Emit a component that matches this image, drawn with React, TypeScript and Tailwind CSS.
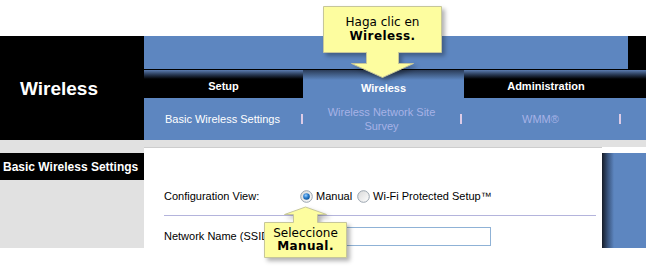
import React from "react";

function Radio({ checked }: { checked: boolean }) {
  return (
    <svg width="13" height="13" viewBox="0 0 13 13" className="shrink-0">
      <defs>
        <linearGradient id={checked ? "rgA" : "rgB"} x1="0" y1="0" x2="1" y2="1">
          <stop offset="0" stopColor="#d8d8d8" />
          <stop offset="1" stopColor="#ffffff" />
        </linearGradient>
        <radialGradient id="dot" cx="0.4" cy="0.35" r="0.7">
          <stop offset="0" stopColor="#9fd0ff" />
          <stop offset="0.5" stopColor="#2a7fd0" />
          <stop offset="1" stopColor="#0b4a8c" />
        </radialGradient>
      </defs>
      <circle cx="6.5" cy="6.5" r="5.8" fill={`url(#${checked ? "rgA" : "rgB"})`} stroke="#9aa4ae" strokeWidth="1" />
      {checked && <circle cx="6.5" cy="6.5" r="3.3" fill="url(#dot)" />}
    </svg>
  );
}

export default function App() {
  const blue = "bg-[#5d86c0]";
  return (
    <div className="relative w-[646px] h-[268px] overflow-hidden bg-white font-['Liberation_Sans',Arial,sans-serif]">
      <div className="h-[36px]" />
      {/* Header */}
      <div className="flex h-[104px]">
        <div className="w-[144px] bg-black flex items-center pl-[20px]">
          <span className="text-white font-bold text-[19px] leading-none">Wireless</span>
        </div>
        <div className="flex-1 flex flex-col">
          <div className="flex h-[33px]">
            <div className={`flex-1 ${blue}`} />
            <div className="w-[18px] bg-black" />
          </div>
          <div className="h-[1px] bg-black" />
          <div className="flex h-[28px] text-[11px] font-bold text-white">
            <div className="w-[159px] bg-[linear-gradient(to_bottom,#5b7cb0_0px,#24334c_5px,#000_9px)] flex items-center justify-center pt-[4px]">
              Setup
            </div>
            <div className="w-[161px] bg-[linear-gradient(to_bottom,#2b3c58_0px,#5d86c0_10px)] flex items-center justify-center pt-[8px]">
              Wireless
            </div>
            <div className="flex-1 bg-[linear-gradient(to_bottom,#5b7cb0_0px,#24334c_5px,#000_9px)] flex items-center justify-center pt-[4px] pr-[18px]">
              Administration
            </div>
          </div>
          <div className={`flex h-[42px] ${blue} text-[11px] leading-[14px]`}>
            <div className="w-[157px] flex items-center justify-center text-white">Basic Wireless Settings</div>
            <div className="w-[2px] flex items-center"><div className="w-[2px] h-[10px] bg-[#dccbe6]" /></div>
            <div className="w-[157px] flex items-center justify-center text-[#a7b2e6] text-center">
              <span className="w-[120px]">Wireless Network Site Survey</span>
            </div>
            <div className="w-[2px] flex items-center"><div className="w-[2px] h-[10px] bg-[#dccbe6]" /></div>
            <div className="w-[157px] flex items-center justify-center text-[#a7b2e6]">WMM®</div>
            <div className="w-[2px] flex items-center"><div className="w-[2px] h-[10px] bg-[#dccbe6]" /></div>
          </div>
        </div>
      </div>
      {/* gray strip */}
      <div className="h-[7px] bg-[#e1e1e1]" />
      {/* Body */}
      <div className="flex h-[121px]">
        <div className="w-[144px]">
          <div className="h-[101px] bg-[#e1e1e1] pt-[6px]">
            <div className="h-[27px] bg-black flex items-center pl-[3px] text-white font-bold text-[12px]">
              Basic Wireless Settings
            </div>
          </div>
        </div>
        <div className="w-[458px] bg-white border-t border-[#cdcdcd] pl-[20px] pt-[38px] text-[11px] text-black">
          <div className="flex items-center h-[20px]">
            <span className="w-[136px]">Configuration View:</span>
            <Radio checked />
            <span className="ml-[3px]">Manual</span>
            <span className="ml-[5px]"><Radio checked={false} /></span>
            <span className="ml-[3px]">Wi-Fi Protected Setup™</span>
          </div>
          <div className="mt-[9px] w-[432px] h-[1px] bg-[#b4b4dc]" />
          <div className="flex items-center h-[20px] mt-[10px]">
            <span className="w-[181px]">Network Name (SSID):</span>
            <div className="w-[146px] h-[19px] border border-[#8fb2d6] bg-white" />
          </div>
        </div>
        <div className="w-[44px] pt-[6px]">
          <div className="h-[95px] bg-[linear-gradient(to_right,#161c28_0px,#3a557e_6px,#5d86c0_12px)]" />
        </div>
      </div>

      {/* Callout 1 */}
      <svg
        className="absolute left-[320px] top-[3px] drop-shadow-[3px_3px_2px_rgba(0,0,0,0.3)]"
        width="130"
        height="80"
        viewBox="0 0 130 80"
      >
        <path
          d="M3.5,3.5 H121.5 V49.5 H78.5 V60.5 H93.5 L62.5,74.5 L31.5,60.5 H46.5 V49.5 H3.5 Z"
          fill="#fdfd9f"
          stroke="#c6c69a"
          strokeWidth="1"
        />
      </svg>
      <div className="absolute left-[323px] top-[6px] w-[119px] h-[46px] flex flex-col items-center justify-center font-['DejaVu_Sans',Verdana,sans-serif] text-[12px] leading-[14px] text-black">
        <span>Haga clic en</span>
        <span className="font-bold tracking-[0.4px]">Wireless.</span>
      </div>

      {/* Callout 2 */}
      <svg
        className="absolute left-[260px] top-[203px] drop-shadow-[3px_3px_2px_rgba(0,0,0,0.3)]"
        width="95"
        height="62"
        viewBox="0 0 95 62"
      >
        <path
          d="M4.5,19.5 H33.5 V11.5 H24.5 L45.5,4 L66.5,11.5 H57.5 V19.5 H86.5 V54.5 H4.5 Z"
          fill="#fdfd9f"
          stroke="#c6c69a"
          strokeWidth="1"
        />
      </svg>
      <div className="absolute left-[264px] top-[222px] w-[83px] h-[35px] flex flex-col items-center justify-center font-['DejaVu_Sans',Verdana,sans-serif] text-[12px] leading-[13px] text-black">
        <span>Seleccione</span>
        <span className="font-bold tracking-[0.4px]">Manual.</span>
      </div>
    </div>
  );
}
